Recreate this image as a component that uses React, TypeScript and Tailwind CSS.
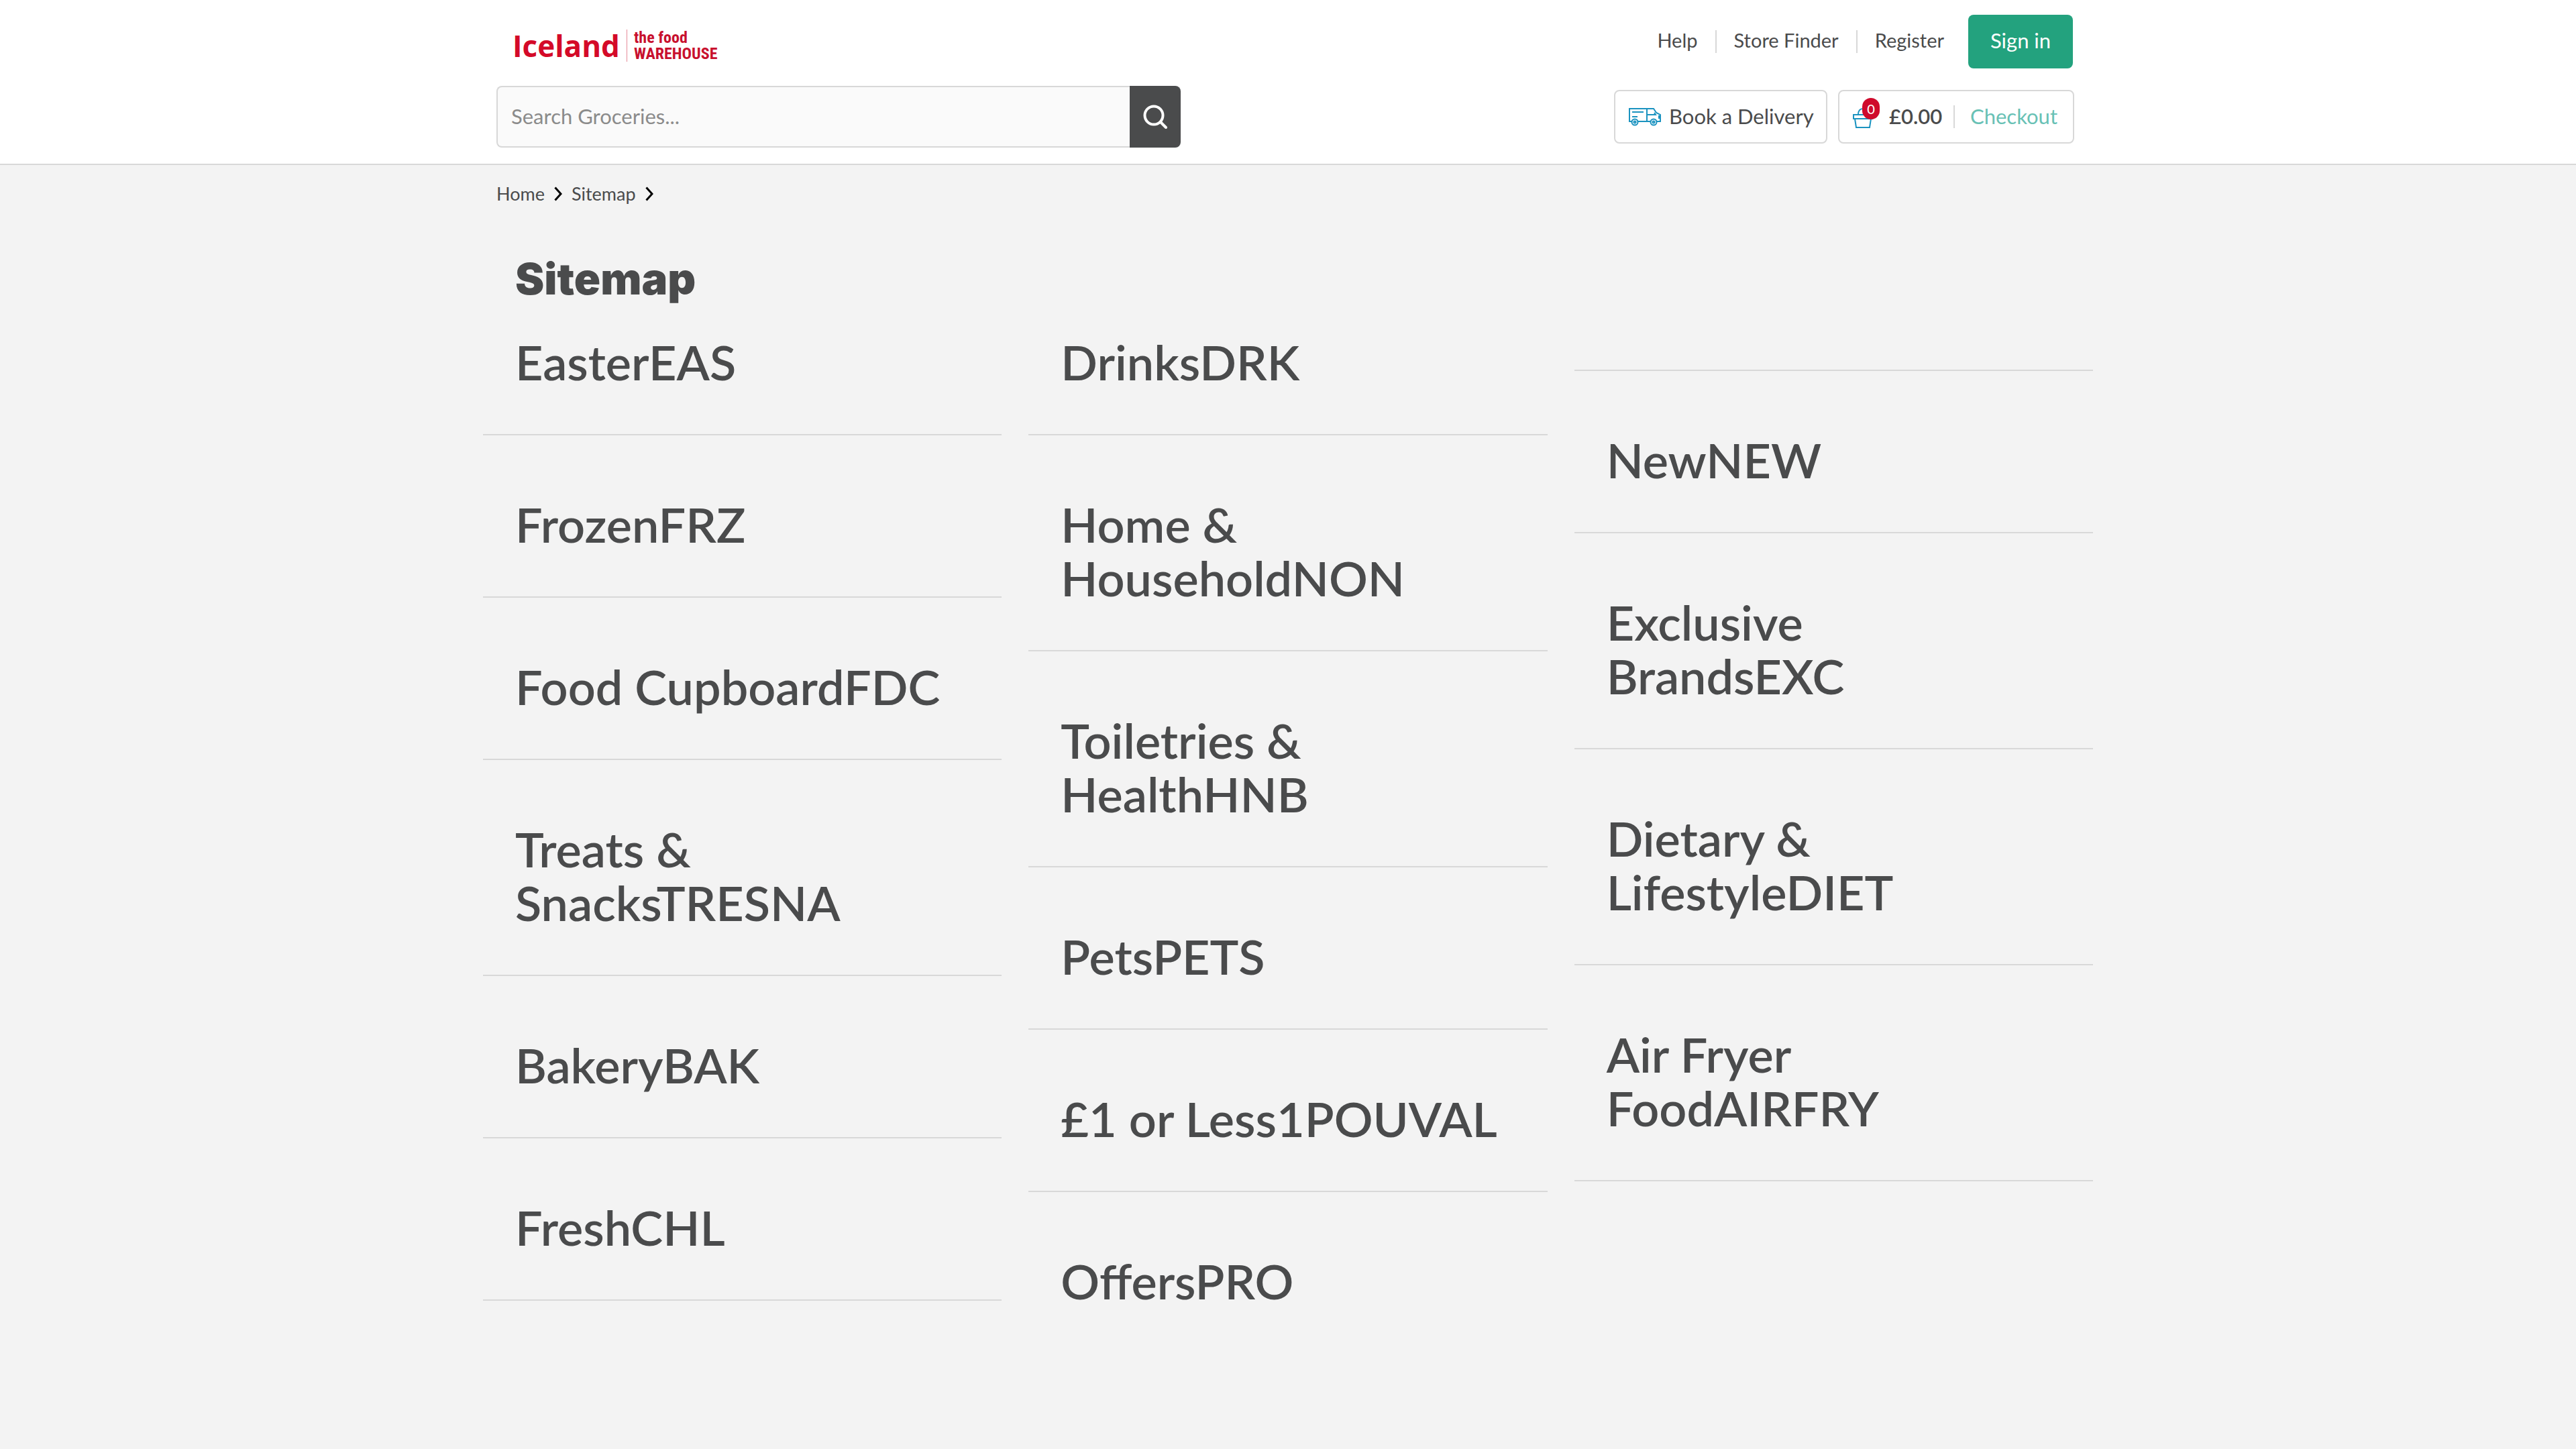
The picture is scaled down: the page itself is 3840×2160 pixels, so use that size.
const cols: { lead?: boolean; items: string[] }[] = [
  { items: ['EasterEAS', 'FrozenFRZ', 'Food CupboardFDC', 'Treats & SnacksTRESNA', 'BakeryBAK', 'FreshCHL'] },
  { items: ['DrinksDRK', 'Home & HouseholdNON', 'Toiletries & HealthHNB', 'PetsPETS', '£1 or Less1POUVAL', 'OffersPRO'] },
  { lead: true, items: ['NewNEW', 'Exclusive BrandsEXC', 'Dietary & LifestyleDIET', 'Air Fryer FoodAIRFRY'] },
];

function Van() {
  return (
    <svg width="48" height="28" viewBox="0 0 48 28" fill="none" stroke="#1b93c0" strokeWidth="2" aria-hidden="true">
      <path d="M4 21H1V2H37L41 8L47 11V21H42M14 21H32M27 2V21M5 7H22M5 14H13M27 11H40L38 8M47 13H45V16H47" />
      <circle cx="9" cy="22" r="4.500" />
      <circle cx="9" cy="22" r="1.500" />
      <circle cx="37" cy="22" r="4.500" />
      <circle cx="37" cy="22" r="1.500" />
    </svg>
  );
}

function Basket() {
  return (
    <svg width="30" height="32" viewBox="0 0 30 32" fill="none" stroke="#1b93c0" strokeWidth="2" aria-hidden="true">
      <path d="M8 11C8 5 11 2 15 2S22 5 22 11" />
      <path d="M1 11H29V17H1ZM3 17L5 30H25L27 17" />
    </svg>
  );
}

function Chevron() {
  return (
    <svg width="12" height="22" viewBox="0 0 12 22" fill="none" stroke="#000" strokeWidth="3" aria-hidden="true">
      <path d="M1.500 1.500L10 11L1.500 20.500" />
    </svg>
  );
}

export default function App() {
  return (
    <div className="min-h-screen bg-[#f3f3f3] font-['Lato','Noto_Sans',sans-serif] text-[#4a4b4c]">
      <header className="border-b-2 border-[#d8d8d8] bg-white">
        <div className="mx-auto flex h-[244px] max-w-[2360px] justify-between">
          <div className="flex w-[1020px] flex-col justify-between pt-10 pb-6">
            <a href="#" className="flex h-14 items-center self-start pl-6 text-[#d40a28]">
              <span className="font-['Open_Sans',sans-serif] text-[44px] leading-none font-bold">Iceland</span>
              <span className="mx-2.5 h-12 w-px bg-[#e58a98]" />
              <span className="flex flex-col font-['Liberation_Sans_Narrow','Roboto_Condensed',sans-serif] text-2xl leading-6 font-bold text-[#c8102e]">
                <span>the food</span>
                <span>WAREHOUSE</span>
              </span>
            </a>
            <form className="flex h-[92px]">
              <input
                type="search"
                aria-label="Search groceries"
                placeholder="Search Groceries..."
                className="min-w-0 flex-1 rounded-l-lg border-2 border-r-0 border-[#d8d8d8] bg-[#fafafa] px-5 pb-0.5 text-[31px] placeholder:text-[#8b8b8b]"
              />
              <button type="button" aria-label="Search" className="flex w-[76px] items-center justify-center rounded-r-lg bg-[#4a4b4c]">
                <svg width="36" height="36" viewBox="0 0 36 36" fill="none" stroke="#fff" strokeWidth="4" strokeLinecap="round" aria-hidden="true">
                  <circle cx="16" cy="16" r="13.500" />
                  <path d="M26 26L34 34" />
                </svg>
              </button>
            </form>
          </div>
          <div className="flex flex-col justify-between pt-[22px] pr-2 pb-[30px]">
            <nav className="flex h-20 items-center justify-end text-[29px]">
              <a href="#" className="pb-1">Help</a>
              <span className="mx-[26px] h-[34px] w-0.5 bg-[#d8d8d8]" />
              <a href="#" className="pb-1">Store Finder</a>
              <span className="mx-[26px] h-[34px] w-0.5 bg-[#d8d8d8]" />
              <a href="#" className="pb-1">Register</a>
              <a href="#" className="mr-0.5 ml-9 flex h-20 w-[156px] items-center justify-center rounded-lg bg-[#23a27e] pb-1 text-[31px] text-white">Sign in</a>
            </nav>
            <div className="flex h-20 justify-end gap-4 text-[31px]">
              <a href="#" className="flex w-[318px] items-center gap-3 rounded-lg border-2 border-[#d8d8d8] pl-5 whitespace-nowrap">
                <Van />
                <span className="pb-0.5">Book a Delivery</span>
              </a>
              <div className="flex w-[352px] items-center rounded-lg border-2 border-[#d8d8d8]">
                <a href="#" className="flex flex-1 items-center gap-6 pl-5">
                  <span className="relative pt-1">
                    <Basket />
                    <span className="absolute -top-2.5 left-3.5 flex h-8 w-[26px] items-center justify-center rounded-full bg-[#cf0a2c] text-xl text-white">0</span>
                  </span>
                  <span className="pb-0.5 font-semibold">£0.00</span>
                </a>
                <span className="h-[34px] w-0.5 bg-[#d8d8d8]" />
                <a href="#" className="flex w-[176px] justify-center pb-0.5 text-[#68c1b5]">Checkout</a>
              </div>
            </div>
          </div>
        </div>
      </header>
      <main>
        <nav aria-label="Breadcrumb" className="mx-auto flex h-[86px] max-w-[2360px] items-center gap-3.5 text-[27px]">
          <a href="#">Home</a>
          <Chevron />
          <a href="#">Sitemap</a>
          <Chevron />
        </nav>
        <div className="mx-auto max-w-[2400px]">
          <h1 className="px-12 pt-11 pb-[43px] font-['Inter',sans-serif] text-[65px] leading-[80px] font-black">Sitemap</h1>
          <div className="grid grid-cols-3 gap-10">
            {cols.map((c, i) => (
              <div key={i} className={c.lead ? 'pt-[52px]' : 'pt-0'}>
                {c.lead && <div className="mb-[92px] h-0.5 bg-[#d8d8d8]" />}
                <ul className="flex flex-col gap-[92px]">
                  {c.items.map((t) => (
                    <li key={t} className={t === 'OffersPRO' ? 'pr-16 pl-12' : 'border-b-2 border-[#d8d8d8] pr-16 pb-[68px] pl-12'}>
                      <a href="#" className="block text-[72px] leading-[80px] font-semibold">{t}</a>
                    </li>
                  ))}
                </ul>
              </div>
            ))}
          </div>
        </div>
      </main>
    </div>
  );
}
